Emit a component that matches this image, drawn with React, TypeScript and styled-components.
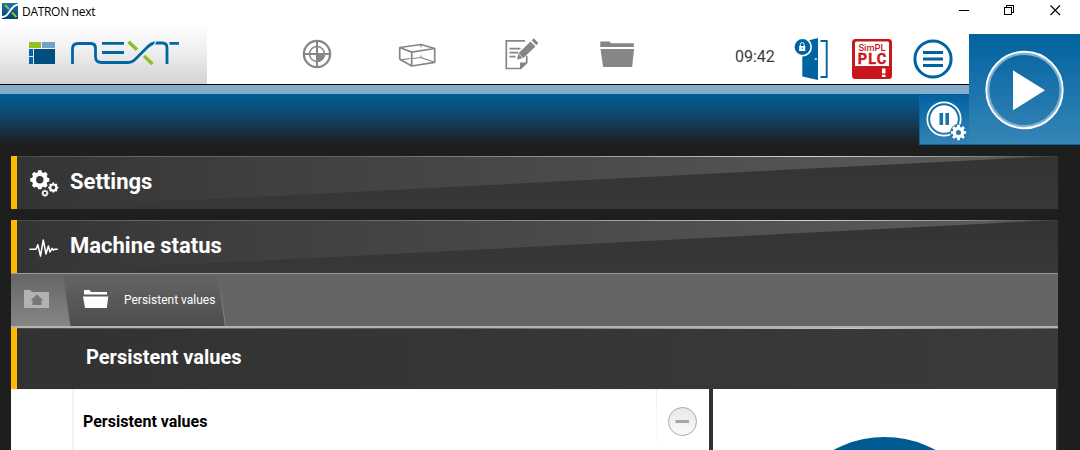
import React from "react";
import styled, { createGlobalStyle } from "styled-components";

const GlobalStyle = createGlobalStyle`
  * { box-sizing: border-box; }
  body { margin: 0; overflow: hidden; background: #1e1e1e; }
  svg { display: block; flex: none; }
`;

const Screen = styled.div`
  position: relative;
  width: 1080px;
  height: 450px;
  overflow: hidden;
  display: flex;
  flex-direction: column;
  background: #1e1e1e;
  font-family: Roboto, "Liberation Sans", sans-serif;
  color: #fff;
`;

const TitleBar = styled.div`
  flex: none;
  height: 24px;
  display: flex;
  align-items: center;
  padding: 0 19px 3px 2px;
  background: #fff;
`;

const TitleText = styled.span`
  flex: 1;
  margin-left: 4px;
  font: 12px/20px "Open Sans", sans-serif;
  letter-spacing: -0.3px;
  padding-top: 3px;
  color: #000;
`;

const WindowButtons = styled.div`
  display: flex;
  gap: 35px;
`;

const Header = styled.header`
  flex: none;
  height: 60px;
  display: flex;
  align-items: center;
  background: #fff;
`;

const Brand = styled.div`
  width: 207px;
  height: 60px;
  background: linear-gradient(#fefefe, #f1f1f1 40%, #d3d3d3);
`;

const Nav = styled.nav`
  margin-left: 60px;
  display: grid;
  grid-template-columns: repeat(4, 100px);
  justify-items: center;
`;

const Clock = styled.span`
  width: 57px;
  margin-left: 68px;
  padding-top: 5px;
  font-size: 16px;
  line-height: 20px;
  color: #3c3c3c;
`;

const StatusIcons = styled.div`
  display: flex;
  margin-top: 10px;
`;

const Stripe = styled.div`
  flex: none;
  height: 10px;
  border-top: 1px solid #000;
  background: #82aecb;
`;

const BlueFade = styled.div`
  flex: none;
  height: 62px;
  background: linear-gradient(#005b94, #0b4f7a 15px, #1e1e1e 51px);
`;

const RunControls = styled.div`
  position: absolute;
  top: 34px;
  right: 0;
  display: flex;
  align-items: flex-end;
`;

const PauseButton = styled.div`
  width: 50px;
  height: 50px;
  border: 1px solid #0767a3;
  border-width: 0 0 1px 1px;
  background: linear-gradient(#0263a0, #3383b5);
`;

const PlayButton = styled.div`
  width: 111px;
  height: 111px;
  border-bottom: 1px solid #0767a3;
  background: linear-gradient(#0262a0, #3585b6);
`;

const Content = styled.main`
  width: 1047px;
  margin-left: 11px;
  display: flex;
  flex-direction: column;
`;

const Band = styled.div<{ $gap?: number }>`
  flex: none;
  position: relative;
  height: 53px;
  margin-bottom: ${(p) => p.$gap ?? 0}px;
  display: flex;
  align-items: center;
  border-left: 6px solid #ffba00;
  background: linear-gradient(#333, #383838);
`;

const Sheen = styled.svg`
  position: absolute;
  inset: 0;
`;

const BandIcon = styled.div`
  position: relative;
  width: 53px;
  padding-left: 12px;
`;

const BandTitle = styled.h2`
  position: relative;
  margin: 0;
  padding-bottom: 2px;
  font-size: 22px;
  line-height: 26px;
  font-weight: 700;
`;

const Crumbs = styled.div`
  flex: none;
  height: 55px;
  position: relative;
  display: flex;
  border-top: 1px solid #999;
  border-bottom: 2px solid #b3b3b3;
  background: #656565;
`;

const CrumbShapes = styled.svg`
  position: absolute;
  inset: 0;
`;

const HomeCrumb = styled.div`
  position: relative;
  width: 59px;
  padding: 16px 0 0 13px;
`;

const FolderCrumb = styled.div`
  position: relative;
  display: flex;
  align-items: flex-start;
  padding: 14px 0 0 13px;
`;

const CrumbLabel = styled.span`
  margin: 4px 0 0 15px;
  font-size: 12px;
  line-height: 16px;
`;

const SectionHead = styled.div`
  flex: none;
  height: 61px;
  display: flex;
  align-items: center;
  padding: 0 0 3px 69px;
  border-left: 6px solid #ffba00;
  background: linear-gradient(90deg, #4a4a4a, #666 20%, #555 40%, #c4c4c4 80%, #666) top / 100% 1px no-repeat,
    linear-gradient(90deg, #323232, #3a3a3a);
`;

const SectionTitle = styled.h3`
  margin: 0;
  font-size: 20px;
  line-height: 24px;
  font-weight: 700;
`;

const Body = styled.div`
  flex: none;
  height: 61px;
  display: flex;
  gap: 4px;
  padding-right: 2px;
  background: #333;
`;

const ListRow = styled.div`
  width: 698px;
  display: flex;
  border-top: 1px solid #f3f3f3;
  background: #fff;
`;

const RowGutter = styled.div`
  width: 63px;
  border-right: 2px solid #f4f4f4;
`;

const RowLabel = styled.div`
  flex: 1;
  padding: 22px 0 0 9px;
  font-size: 16px;
  line-height: 20px;
  font-weight: 700;
  color: #000;
`;

const RowAction = styled.div`
  width: 53px;
  padding: 16px 0 0 11px;
  background: linear-gradient(#eee, #fff) left / 1px 100% no-repeat;
`;

const Preview = styled.div`
  flex: 1;
  overflow: hidden;
  background: #fff;
`;

function gearPath(cx: number, cy: number, r: number, inner: number, hole: number, teeth = 8) {
  const pts: string[] = [];
  const step = (Math.PI * 2) / teeth;
  for (let i = 0; i < teeth; i++) {
    const a = i * step - Math.PI / 2;
    [
      [inner, -0.34],
      [r, -0.22],
      [r, 0.22],
      [inner, 0.34],
    ].forEach(([rad, off]) => {
      pts.push(`${(cx + rad * Math.cos(a + off * step)).toFixed(2)} ${(cy + rad * Math.sin(a + off * step)).toFixed(2)}`);
    });
  }
  return `M${pts.join("L")}Z M${cx - hole} ${cy}a${hole} ${hole} 0 1 0 ${hole * 2} 0a${hole} ${hole} 0 1 0 ${-hole * 2} 0Z`;
}

const AppIcon = () => (
  <svg width="16" height="16" viewBox="0 0 16 16">
    <defs>
      <linearGradient id="appbg" x2="0" y2="1">
        <stop stopColor="#1873ae" />
        <stop offset="1" stopColor="#03436f" />
      </linearGradient>
    </defs>
    <path fill="url(#appbg)" d="M0 0h16v16H0z" />
    <path stroke="#9bc12c" strokeWidth="2" d="M3 2l4 4M10 9.500l4.500 4.500" />
    <path fill="none" stroke="#fff" strokeWidth="1.800" d="M0 14c4 0 5-2 7.500-5.500S12 2 16 1.500" />
  </svg>
);

const BrandLogo = () => (
  <svg width="207" height="60" viewBox="0 24 207 60">
    <path fill="#95c11f" d="M29 42h12v6H29z" />
    <path fill="#6ea4cb" d="M42 42h13v6H42z" />
    <path fill="#0067a3" d="M29 49h4v7h-4zM29 57h4v7h-4z" />
    <path fill="#004f80" d="M34 49h21v15H34z" />
    <g fill="none" stroke="#0067a3" strokeWidth="2.800">
      <path d="M72.500 64V49q0-5.500 5.500-5.500h13q4.500 0 4.500 5v8q0 6 6 6h27q3.500 0 6-2.500l13-13q4-4 8-4h7q4.500 0 4.500 5V64" />
      <path d="M102 43.400h22M102 52.500h22M169.500 43.400h9.500" />
    </g>
    <path stroke="#f1f1f1" strokeWidth="1.200" d="M153 46.500l3-5" />
    <path stroke="#8cbd22" strokeWidth="3.400" d="M128.500 41.800l8.500 8M144 56l8.500 8" />
  </svg>
);

const TargetIcon = () => (
  <svg width="50" height="44" viewBox="292 32 50 44" fill="none" stroke="#868686">
    <circle cx="317" cy="54" r="13.100" strokeWidth="2.300" />
    <circle cx="317" cy="54" r="7.500" strokeWidth="1.500" />
    <path fill="#868686" stroke="none" d="M317 54h8a8 8 0 0 1-8 8z" />
    <path strokeWidth="2" d="M317 41v26M304 54h26" />
  </svg>
);

const BoxIcon = () => (
  <svg width="50" height="44" viewBox="392 32 50 44" fill="none" stroke="#868686">
    <path strokeWidth="1.700" strokeLinejoin="round" d="M399.700 59.300V47.500l21.300-3 13.700 4V62.300l-23 3.700-12-6.700M399.700 47.500l12 4.600 23-3.600M411.700 52.100V66" />
    <path strokeWidth="1.200" d="M421 44.500v2.800M421 55.500v2l13 4.500M421 57.500l-8.500 1M410.500 58.500l-10.500 1.300" />
  </svg>
);

const NoteIcon = () => (
  <svg width="50" height="44" viewBox="492 32 50 44">
    <g fill="none" stroke="#868686" strokeWidth="1.700">
      <path d="M525 40.900h-18.700v27.600h14.500l5.900-5.800v-7" />
      <path d="M509.500 48.700h11M509.500 52.700h8.500M509.500 56.700h6" />
    </g>
    <path fill="#868686" d="M520 69v-6.500h7zM517 59.500l1.500-6.300 12-11.700 5 5.100-12.200 11.500zM531.700 40.500l2.100-2.200 4.500 4.700-2 2.200z" />
    <path stroke="#fff" strokeWidth=".7" d="M518.500 53.500l4.600 4.700" />
  </svg>
);

const FolderIcon = () => (
  <svg width="50" height="44" viewBox="592 32 50 44" fill="#868686">
    <path d="M600.300 47v-5.500h9l2 1.700h22.500V47zM600.500 49h33.600l-2 18h-29z" />
  </svg>
);

const DoorIcon = () => (
  <svg width="60" height="44" viewBox="792 37 60 44">
    <path fill="#0064a0" fillRule="evenodd" d="M802.300 42l15.700-4v42l-15.700-3.600zM814.800 58.200v1.600h2v-1.600z" />
    <path fill="none" stroke="#0064a0" strokeWidth="1.900" d="M820.500 41h6.200v36h-6.200" />
    <circle cx="802.500" cy="47" r="9.500" fill="#fff" />
    <circle cx="802.500" cy="47" r="7.900" fill="#0064a0" />
    <path fill="#fff" fillRule="evenodd" d="M799.200 46h6v5h-6zM801.700 47.500v1.500h1v-1.500z" />
    <path fill="none" stroke="#fff" strokeWidth="1" d="M800.300 46v-1.500a1.900 1.900 0 0 1 3.800 0V46" />
  </svg>
);

const PlcIcon = () => (
  <svg width="61" height="44" viewBox="852 37 61 44" fontFamily="Roboto, sans-serif">
    <rect x="852" y="39" width="40" height="40" rx="3.500" fill="#c9161d" />
    <path fill="#fff" d="M855 43q0-1.500 1.500-1.500h31q1.500 0 1.500 1.500v23h-34z" />
    <text x="858.500" y="51" fontSize="9.600" fontWeight="500" fill="#c9161d" textLength="27" lengthAdjust="spacingAndGlyphs">SimPL</text>
    <text x="857.800" y="63.600" fontSize="14.500" fontWeight="700" fill="#c9161d" stroke="#c9161d" strokeWidth=".4" textLength="28.500" lengthAdjust="spacing">PLC</text>
    <path fill="#fff" d="M882 68.500h3.500v5H882zM882 74.700h3.500V77H882z" />
  </svg>
);

const MenuIcon = () => (
  <svg width="40" height="44" viewBox="913 37 40 44" fill="none" stroke="#0064a0">
    <circle cx="933" cy="59" r="18.100" strokeWidth="3" />
    <path strokeWidth="3.100" d="M923 52.500h20M923 59h20M923 65.500h20" />
  </svg>
);

const PauseIcon = () => (
  <svg width="49" height="49" viewBox="920 95 49 49">
    <circle cx="944" cy="119" r="16.700" fill="none" stroke="#fff" strokeWidth="1.700" />
    <circle cx="944" cy="119" r="13.800" fill="#fff" />
    <path fill="#1a72ac" d="M939.500 113h3.600v12h-3.600zM945.400 113h3.600v12h-3.600z" />
    <circle cx="958.500" cy="132.500" r="8.500" fill="#2879b0" />
    <path fill="#fff" fillRule="evenodd" d={gearPath(958.500, 132.500, 7.800, 5.800, 2.500)} />
  </svg>
);

const PlayIcon = () => (
  <svg width="111" height="110" viewBox="969 34 111 110">
    <circle cx="1024.500" cy="90" r="36.300" fill="none" stroke="#7fb0d0" strokeWidth="2.400" />
    <circle cx="1024.500" cy="90" r="38.200" fill="none" stroke="#fff" strokeWidth="1.900" />
    <path fill="#fff" d="M1013 70.300l32 20-32 20z" />
  </svg>
);

const GearsIcon = () => (
  <svg width="30" height="30" viewBox="29 168 30 30" fill="#fff" fillRule="evenodd">
    <path d={gearPath(39.800, 179.800, 9.700, 7.900, 3.700)} />
    <path d={gearPath(53.300, 187.600, 5.100, 4.100, 2)} />
    <path d={gearPath(45, 193.200, 3.500, 2.900, 1.400)} />
  </svg>
);

const PulseIcon = () => (
  <svg width="30" height="30" viewBox="29 231 30 30" fill="none" stroke="#fff" strokeWidth="1.500" strokeLinejoin="round" strokeLinecap="round">
    <path d="M30 248.300h6l1.800-4.500 2.700 11.200 2.800-16 2.700 14 2.400-8 1.600 6 2-3.700 1.500 2 1-1h2.700" />
  </svg>
);

const HomeFolderIcon = () => (
  <svg width="25" height="18" viewBox="0 0 25 18">
    <path fill="#b2b2b2" d="M0 0h6l2 2h17v16H0z" />
    <path fill="#777" d="M13 4.500l6.300 5.700h-1.800V15h-9v-4.800H6.700z" />
  </svg>
);

const OpenFolderIcon = () => (
  <svg width="26" height="20" viewBox="0 0 26 20" fill="#fff">
    <path d="M1 6.500V2h5.500L8 4h16v2.500zM0 8.600h25.300L23.800 20H2z" />
  </svg>
);

const BandSheen = ({ id }: { id: string }) => (
  <Sheen width="1041" height="53" viewBox="0 0 1041 53">
    <defs>
      <linearGradient id={`${id}-fill`}>
        <stop stopColor="#343434" />
        <stop offset=".2" stopColor="#3e3e3e" />
        <stop offset=".5" stopColor="#494949" />
        <stop offset=".8" stopColor="#555" />
        <stop offset=".93" stopColor="#5b5b5b" />
        <stop offset="1" stopColor="#444" />
      </linearGradient>
      <linearGradient id={`${id}-line`}>
        <stop stopColor="#4a4a4a" />
        <stop offset=".12" stopColor="#696969" />
        <stop offset=".3" stopColor="#606060" />
        <stop offset=".55" stopColor="#999" />
        <stop offset=".76" stopColor="#d0d0d0" />
        <stop offset=".9" stopColor="#999" />
        <stop offset="1" stopColor="#383838" />
      </linearGradient>
    </defs>
    <path fill={`url(#${id}-fill)`} d="M0 0h1041L50 50.500 0 53z" />
    <path fill={`url(#${id}-line)`} d="M0 0h1041v1H0z" />
  </Sheen>
);

export default function App() {
  return (
    <Screen>
      <GlobalStyle />
      <TitleBar>
        <AppIcon />
        <TitleText>DATRON next</TitleText>
        <WindowButtons>
          <svg width="11" height="11" viewBox="0 0 11 11" shapeRendering="crispEdges"><path fill="#000" d="M1 5h10v1H1z" /></svg>
          <svg width="11" height="11" viewBox="0 0 11 11" shapeRendering="crispEdges" fill="none" stroke="#000"><path d="M.5 2.500h7v7h-7zM2.500 2.500v-2h7v7h-2" /></svg>
          <svg width="11" height="11" viewBox="0 0 11 11" stroke="#000" strokeWidth="1.100"><path d="M.5 .5l9.500 9.500M10 .5L.5 10" /></svg>
        </WindowButtons>
      </TitleBar>
      <Header>
        <Brand><BrandLogo /></Brand>
        <Nav>
          <TargetIcon />
          <BoxIcon />
          <NoteIcon />
          <FolderIcon />
        </Nav>
        <Clock>09:42</Clock>
        <StatusIcons>
          <DoorIcon />
          <PlcIcon />
          <MenuIcon />
        </StatusIcons>
      </Header>
      <Stripe />
      <BlueFade />
      <Content>
        <Band $gap={11}>
          <BandSheen id="settings" />
          <BandIcon><GearsIcon /></BandIcon>
          <BandTitle>Settings</BandTitle>
        </Band>
        <Band>
          <BandSheen id="machine" />
          <BandIcon><PulseIcon /></BandIcon>
          <BandTitle>Machine status</BandTitle>
        </Band>
        <Crumbs>
          <CrumbShapes width="1047" height="52" viewBox="0 0 1047 52">
            <defs>
              <linearGradient id="crumb-home" x2="0" y2="1">
                <stop stopColor="#666" />
                <stop offset="1" stopColor="#858585" />
              </linearGradient>
              <linearGradient id="crumb-open" x2="0" y2="1">
                <stop stopColor="#656565" />
                <stop offset="1" stopColor="#4d4d4d" />
              </linearGradient>
              <linearGradient id="crumb-edge" gradientUnits="userSpaceOnUse" x1="0" y1="0" x2="0" y2="52">
                <stop stopColor="#666" />
                <stop offset="1" stopColor="#858585" />
              </linearGradient>
            </defs>
            <path fill="url(#crumb-home)" d="M0 0h51l8 52H0z" />
            <path fill="url(#crumb-open)" d="M51 0h156l7 52H59z" />
            <path fill="none" stroke="url(#crumb-edge)" d="M51.500 0l7.500 52M207 0l7.500 52" />
          </CrumbShapes>
          <HomeCrumb><HomeFolderIcon /></HomeCrumb>
          <FolderCrumb>
            <OpenFolderIcon />
            <CrumbLabel>Persistent values</CrumbLabel>
          </FolderCrumb>
        </Crumbs>
        <SectionHead><SectionTitle>Persistent values</SectionTitle></SectionHead>
        <Body>
          <ListRow>
            <RowGutter />
            <RowLabel>Persistent values</RowLabel>
            <RowAction>
              <svg width="31" height="31" viewBox="0 0 31 31">
                <defs>
                  <linearGradient id="minus-bg" x2="0" y2="1">
                    <stop stopColor="#e8e8e8" />
                    <stop offset="1" stopColor="#fafafa" />
                  </linearGradient>
                </defs>
                <circle cx="15.500" cy="15.500" r="14" fill="url(#minus-bg)" stroke="#aaa" />
                <path fill="#a6a6a6" d="M8.500 14h13.500v3H8.500z" />
              </svg>
            </RowAction>
          </ListRow>
          <Preview>
            <svg width="343" height="61" viewBox="0 0 343 61">
              <circle cx="171.500" cy="155" r="107" fill="#005b92" />
            </svg>
          </Preview>
        </Body>
      </Content>
      <RunControls>
        <PauseButton><PauseIcon /></PauseButton>
        <PlayButton><PlayIcon /></PlayButton>
      </RunControls>
    </Screen>
  );
}
